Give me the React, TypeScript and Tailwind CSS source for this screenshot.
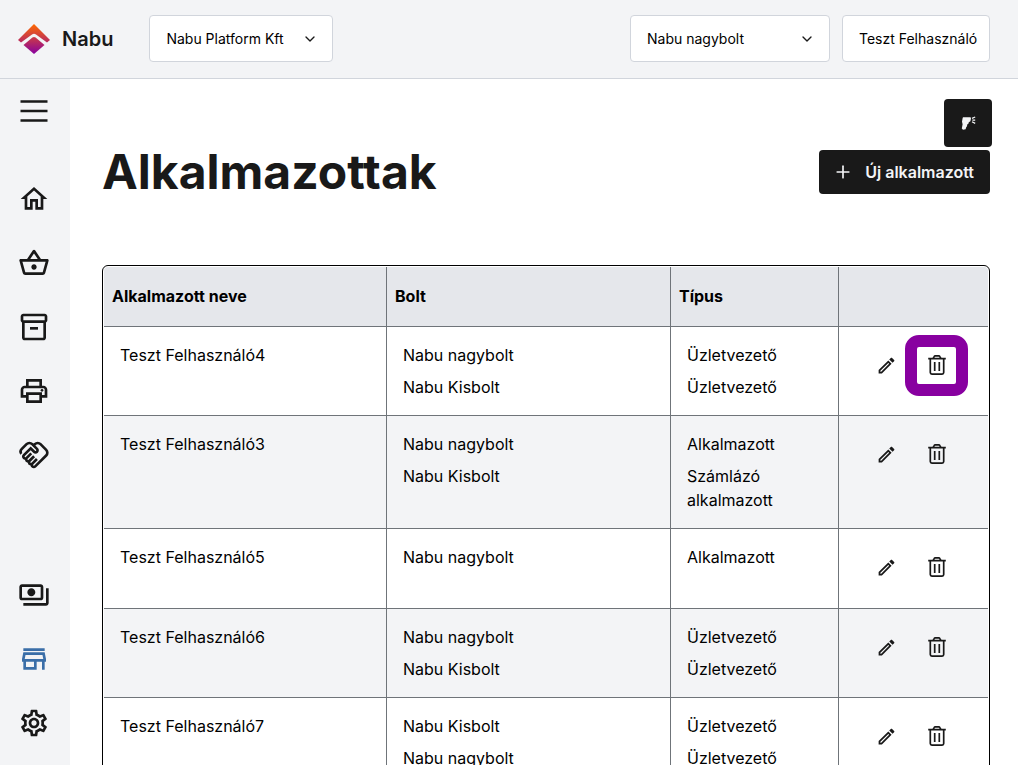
import { useState } from 'react'
import type { ReactNode } from 'react'
import {
  MdOutlineEdit,
  MdOutlineHandshake,
  MdOutlineHome,
  MdOutlineInventory2,
  MdOutlinePayments,
  MdOutlinePrint,
  MdOutlineSettings,
  MdOutlineShoppingBasket,
  MdOutlineStore,
} from 'react-icons/md'
import { ChevronDown, Plus } from 'lucide-react'

type Employee = {
  name: string
  shops: { shop: string; role: string }[]
}

const employees: Employee[] = [
  { name: 'Teszt Felhasználó4', shops: [{ shop: 'Nabu nagybolt', role: 'Üzletvezető' }, { shop: 'Nabu Kisbolt', role: 'Üzletvezető' }] },
  { name: 'Teszt Felhasználó3', shops: [{ shop: 'Nabu nagybolt', role: 'Alkalmazott' }, { shop: 'Nabu Kisbolt', role: 'Számlázó alkalmazott' }] },
  { name: 'Teszt Felhasználó5', shops: [{ shop: 'Nabu nagybolt', role: 'Alkalmazott' }] },
  { name: 'Teszt Felhasználó6', shops: [{ shop: 'Nabu nagybolt', role: 'Üzletvezető' }, { shop: 'Nabu Kisbolt', role: 'Üzletvezető' }] },
  { name: 'Teszt Felhasználó7', shops: [{ shop: 'Nabu Kisbolt', role: 'Üzletvezető' }, { shop: 'Nabu nagybolt', role: 'Üzletvezető' }] },
]

const mainLinks = [
  { label: 'Kezdőlap', icon: MdOutlineHome },
  { label: 'Értékesítés', icon: MdOutlineShoppingBasket },
  { label: 'Készlet', icon: MdOutlineInventory2 },
  { label: 'Nyomtatás', icon: MdOutlinePrint },
  { label: 'Partnerek', icon: MdOutlineHandshake },
]

const bottomLinks = [
  { label: 'Pénzügyek', icon: MdOutlinePayments },
  { label: 'Bolt', icon: MdOutlineStore, active: true },
  { label: 'Beállítások', icon: MdOutlineSettings },
]

function Logo() {
  return (
    <svg width="32" height="30" viewBox="0 0 32 30" aria-hidden="true">
      <defs>
        <linearGradient id="logo" x1="0" y1="0" x2="0" y2="30" gradientUnits="userSpaceOnUse">
          <stop offset="0" stopColor="#ff6a00" />
          <stop offset="1" stopColor="#8800a0" />
        </linearGradient>
      </defs>
      <path fill="url(#logo)" d="M16 0 32 16l-3 2.6L18 10.4q-2-1.4-4 0L3 18.6 0 16Z" />
      <path fill="url(#logo)" d="M14.4 13.6q1.6-1.2 3.2 0L26.5 21 16 30 5.5 21Z" />
    </svg>
  )
}

function TrashIcon() {
  return (
    <svg width="23" height="23" viewBox="0 0 23 23" fill="none" stroke="currentColor" strokeWidth="1.7" aria-hidden="true">
      <path d="M3.2 4.6h17.6M8 4.6l1.1-2q.4-.8 1.2-.8h3.4q.8 0 1.2.8l1.1 2M5.3 4.6v14q0 1.6 1.6 1.6h10.2q1.6 0 1.6-1.6v-14M9.7 7.9V17M14.3 7.9V17" />
    </svg>
  )
}

function ScannerIcon() {
  return (
    <svg width="16" height="16" viewBox="0 0 16 16" fill="currentColor" aria-hidden="true">
      <path d="M3 2.2h7.6l.4 1.2-.6 2.8-1.6 1-.4 1.6-1.2.6-.2 1.8-.8 1-.6 2-2.6.6-1.2-1.2.8-4.4-.6-2.4.6-3.6Z" />
      <path d="M12 3.4 15.2 2M12.4 5.2h2.8M12 6.8l3.2 1.6" stroke="currentColor" strokeWidth="1.2" />
    </svg>
  )
}

function SideLink({ label, active, children }: { label: string; active?: boolean; children: ReactNode }) {
  return (
    <a
      href="#"
      aria-label={label}
      className={`flex h-16 w-17 items-center justify-center ${active ? 'text-[#3a6ea8]' : 'text-[#191919]'}`}
    >
      {children}
    </a>
  )
}

function HeaderSelect({ label, options, className }: { label: string; options: string[]; className: string }) {
  const [value, setValue] = useState(options[0])

  return (
    <div className={`relative ${className}`}>
      <select
        aria-label={label}
        value={value}
        onChange={e => setValue(e.target.value)}
        className="h-[47px] w-full appearance-none rounded border border-gray-300 bg-white px-4 text-sm text-black"
      >
        {options.map(o => <option key={o}>{o}</option>)}
      </select>
      <ChevronDown size={16} className="pointer-events-none absolute top-4 right-[15px]" />
    </div>
  )
}

export default function App() {
  return (
    <div className="flex h-screen flex-col overflow-hidden bg-white font-['Inter',sans-serif] text-[#191919]">
      <header className="flex shrink-0 items-center border-b border-gray-300 bg-gray-100 pt-[15px] pr-7 pb-4 pl-[18px]">
        <a href="#" className="mr-9 flex items-center gap-3">
          <Logo />
          <span className="text-xl font-semibold">Nabu</span>
        </a>
        <HeaderSelect label="Cég" options={['Nabu Platform Kft']} className="w-[184px]" />
        <div className="ml-auto flex gap-3">
          <HeaderSelect label="Bolt" options={['Nabu nagybolt', 'Nabu Kisbolt']} className="w-[200px]" />
          <button className="h-[47px] w-[148px] rounded border border-gray-300 bg-white pl-4 text-left text-sm whitespace-nowrap text-black">
            Teszt Felhasználó
          </button>
        </div>
      </header>

      <div className="flex min-h-0 flex-1">
        <nav className="flex w-[70px] shrink-0 flex-col bg-gray-100 pb-[10px]">
          <button aria-label="Menü" className="mb-6 flex h-16 w-17 items-center justify-center">
            <svg width="28" height="22" viewBox="0 0 28 22" stroke="currentColor" strokeWidth="2.4" aria-hidden="true">
              <path d="M.5 1.5h27M.5 11h27M.5 20.5h27" />
            </svg>
          </button>
          {mainLinks.map(({ label, icon: Icon }) => (
            <SideLink key={label} label={label}><Icon size={32} /></SideLink>
          ))}
          <div className="mt-auto">
            {bottomLinks.map(({ label, icon: Icon, active }) => (
              <SideLink key={label} label={label} active={active}><Icon size={32} /></SideLink>
            ))}
          </div>
        </nav>

        <main className="relative min-w-0 flex-1 overflow-x-hidden overflow-y-auto pt-15 pr-7 pb-8 pl-8 [scrollbar-width:none]">
          {/* Floating scanner button */}
          <button aria-label="Vonalkódolvasó" className="absolute top-5 right-[26px] flex size-12 items-center justify-center rounded bg-[#191919] text-gray-100">
            <ScannerIcon />
          </button>

          <div className="mb-15 flex items-center justify-between">
            <h1 className="py-1 text-5xl leading-[58px] font-bold">Alkalmazottak</h1>
            <button className="flex h-11 items-center gap-3 rounded bg-[#191919] pr-4 pl-[14px] font-semibold text-gray-100">
              <Plus size={20} /> Új alkalmazott
            </button>
          </div>

          <div className="rounded-md border border-black p-px">
            <table className="w-full table-fixed border-separate border-spacing-0 text-black">
              <colgroup>
                <col className="w-[283px]" />
                <col />
                <col className="w-[168px]" />
                <col className="w-[149px]" />
              </colgroup>
              <thead>
                <tr className="h-15 bg-gray-200 text-left">
                  <th className="rounded-tl border-r border-b border-[#6f7479] px-2 pb-0.5">Alkalmazott neve</th>
                  <th className="border-r border-b border-[#6f7479] px-2 pb-0.5">Bolt</th>
                  <th className="border-r border-b border-[#6f7479] px-2 pb-0.5">Típus</th>
                  <th className="rounded-tr border-b border-[#6f7479]" aria-label="Műveletek" />
                </tr>
              </thead>
              <tbody>
                {employees.map((e, i) => (
                  <tr key={e.name} className="h-20 align-top even:bg-gray-100">
                    <td className="border-r border-b border-[#6f7479] p-4">{e.name}</td>
                    <td className="border-r border-b border-[#6f7479] p-4">
                      <ul className="space-y-2">
                        {e.shops.map(s => <li key={s.shop}>{s.shop}</li>)}
                      </ul>
                    </td>
                    <td className="border-r border-b border-[#6f7479] p-4">
                      <ul className="space-y-2">
                        {e.shops.map(s => <li key={s.shop}>{s.role}</li>)}
                      </ul>
                    </td>
                    <td className="border-b border-[#6f7479] pt-5 pl-7 text-[#191919]">
                      <div className="flex gap-[11px]">
                        <button aria-label={`${e.name} szerkesztése`} className="flex h-[37px] w-[39px] items-center justify-center">
                          <MdOutlineEdit size={21} />
                        </button>
                        <button
                          aria-label={`${e.name} törlése`}
                          className={`flex h-[37px] w-[39px] items-center justify-center rounded-xs ${i === 0 ? 'outline-12 outline-[#8800a0]' : ''}`}
                        >
                          <TrashIcon />
                        </button>
                      </div>
                    </td>
                  </tr>
                ))}
              </tbody>
            </table>
          </div>
        </main>
      </div>
    </div>
  )
}
